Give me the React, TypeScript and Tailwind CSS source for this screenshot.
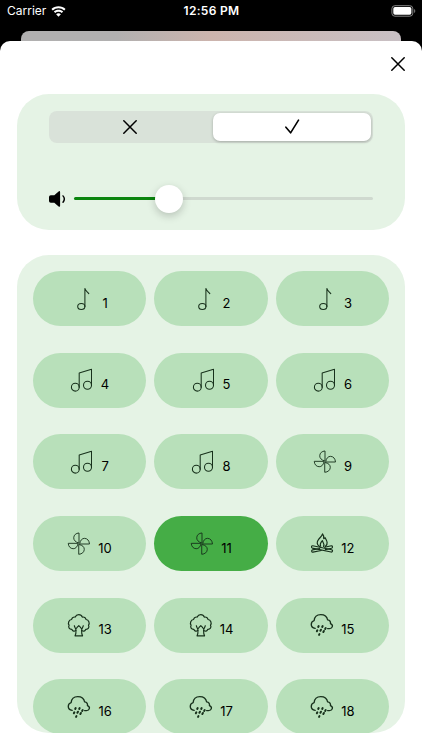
import { useState } from "react";
import type { ReactNode } from "react";

type SoundKind = "note" | "notes" | "fan" | "fire" | "tree" | "rain";

const sounds: SoundKind[] = [
  "note", "note", "note",
  "notes", "notes", "notes",
  "notes", "notes", "fan",
  "fan", "fan", "fire",
  "tree", "tree", "rain",
  "rain", "rain", "rain",
];

const iconShapes: Record<SoundKind, ReactNode> = {
  note: (
    <>
      <ellipse cx="10.3" cy="19.5" rx="3.6" ry="3" />
      <path d="M13.9 19.5V1.4c.4 2.400 2.600 3.300 3.900 5.200M13.900 1.800v2.500" />
    </>
  ),
  notes: (
    <>
      <circle cx="5.3" cy="19.2" r="3.9" />
      <circle cx="17.5" cy="17.2" r="4" />
      <path d="M9.2 19.2V5L21.5 1.3v15.900" />
    </>
  ),
  fan: (
    <g transform="translate(.3 .3) scale(.96)" strokeWidth=".95">
      <path d="M11.600 11C8.400 10.300 6.600 8 6.700 5.700 6.800 2.800 9 .9 12.200.7V11" />
      <path d="M13 11.500C13.500 8.300 15.500 6.200 18 6.300 20.900 6.400 22.900 8.700 23.100 12.200H13" />
      <path d="M12.500 12.800C15.700 13.300 17.800 15.300 17.700 17.800 17.600 20.700 15.300 22.700 11.900 22.900V12.800" />
      <path d="M11.100 12.200C10.500 15.300 8.500 17.200 6.100 17.100 3.200 17 1.200 14.900 1 11.500H11.100" />
    </g>
  ),
  fire: (
    <g transform="translate(.9 .6) scale(.93)">
      <path
        d="M9.200 15C6.200 13 6.100 9.800 8.300 7.200 10 5.200 12 3.600 12.500 1.300c1.500 1.900 1.700 3.300 1.300 5.200l1.500-1c1.900 3.300 3.700 6.600.2 9.500M10.500 14.700c-1.400-2.500.1-4.100 1.900-6.100 0 2.300 2.900 3.400 1.200 6.200"
        strokeWidth="1.300"
      />
      <path
        d="m2 14.200 20.300 4.300c1.600.4 1 2.700-.6 2.400L1.600 16.700c-1.600-.4-1.100-2.800.4-2.500Z"
        strokeWidth="1.250"
      />
      <path
        d="m21.900 14.200-7.100 1.600M9.500 17.100l-7.700 1.500c-1.600.3-1.200 2.700.4 2.400l8.900-1.800M15.500 18.300l6.700-1.500c1.600-.4 1.200-2.900-.3-2.600"
        strokeWidth="1.250"
      />
    </g>
  ),
  tree: (
    <>
      <path
        d="M8.800 17.300C7.500 18.800 5.400 18.300 4.900 16.400 2.500 16.600.9 14.400 2.100 12.300.6 9.900 1.800 6.900 4.600 6.500 4.900 4.700 6.500 3.700 8.200 4.100 9.500.9 14.100.9 15.300 4.100c1.900-.4 3.400.6 3.700 2.400 2.800.4 4 3.400 2.500 5.800 1.200 2.100-.4 4.300-2.800 4.100-.5 1.900-2.600 2.400-3.900.9"
        strokeWidth="1.200"
      />
      <path
        d="M7.300 12.700c.3 1.800 1.600 2.500 1.700 4.600.1 2.300.1 4.200-1 5.500h7.600c-1.100-1.300-1.100-3.200-1-5.500.1-2.100 1.400-2.800 1.700-4.600M9.500 15.300l.8-1.200 1.500-1.500 1.500 1.500.8 1.200"
        strokeWidth="1.150"
      />
    </>
  ),
  rain: (
    <g transform="translate(.6 .2) scale(.95)">
      <path
        d="M4.800 16C2.200 15.500.6 13.700.7 11.600c.1-1.800 1.100-3.100 3-3.700C4.100 3.900 7 1.500 10.700 1.500c3.600 0 6.600 2.200 7.200 5.600 2 .3 3.300 1.900 3 3.900 1.800.8 2.400 2.100 1.900 3.400-.4 1.200-1.500 1.800-3 1.800h-1.900"
        strokeWidth="1.400"
      />
      <path
        d="m8.500 13.500-.5 1M12.700 13.500l-.5 1M15.900 15.600l-.6 1M7.100 18l-.5 1M10.900 17.400l-.6 1.100M14 18.700l-.6 1.100M9.300 22l-.4.800"
        strokeWidth="2.100"
      />
    </g>
  ),
};

function SoundIcon({ kind }: { kind: SoundKind }) {
  return (
    <svg
      viewBox="0 0 24 24"
      className="size-6 shrink-0"
      fill="none"
      stroke="#17301b"
      strokeWidth="1.050"
      strokeLinecap="round"
      strokeLinejoin="round"
    >
      {iconShapes[kind]}
    </svg>
  );
}

function CrossIcon() {
  return (
    <svg
      viewBox="0 0 14 14"
      className="size-3.5"
      fill="none"
      stroke="#000"
      strokeWidth="1.5"
      strokeLinecap="round"
    >
      <path d="m.8.8 12.4 12.400M13.200.8.8 13.200" />
    </svg>
  );
}

function StatusBar() {
  return (
    <div className="grid h-[22px] grid-cols-3 items-center pl-[7px] pr-[6px] text-white">

      <div className="flex items-center gap-[5px] text-[12px]">
        <span>Carrier</span>
        <svg viewBox="0 0 16 12" className="h-[11px] w-[15px]" fill="#fff">
          <path d="M8 .3c3 0 5.700 1.100 7.700 3l-1.500 1.600A9 9 0 0 0 8 2.500a9 9 0 0 0-6.200 2.400L.3 3.300C2.300 1.400 5 .3 8 .3Z" />
          <path d="M8 4.100c2 0 3.800.7 5.100 2l-1.500 1.600A5.200 5.200 0 0 0 8 6.300a5.200 5.200 0 0 0-3.600 1.400L2.900 6.100c1.300-1.300 3.100-2 5.100-2Z" />
          <path d="M8 7.900c1 0 1.900.4 2.600 1L8 11.700 5.400 8.900c.7-.6 1.600-1 2.600-1Z" />
        </svg>
      </div>

      <div className="whitespace-nowrap text-center text-[12px] font-semibold tracking-[0.3px]">
        12:56 PM
      </div>

      <svg viewBox="0 0 25 12" className="h-3 w-[25px] justify-self-end">
        <rect x=".9" y=".7" width="20.900" height="10.500" rx="3" fill="none" stroke="#858585" />
        <rect x="2.300" y="2.100" width="18.100" height="7.700" rx="1.700" fill="#fff" />
        <path d="M23.200 4c1.400.5 1.400 3.400 0 3.900Z" fill="#858585" />
      </svg>

    </div>
  );
}

export default function App() {
  const [enabled, setEnabled] = useState(true);
  const [selected, setSelected] = useState(11);
  const volume = 31.7;

  return (
    <div className="flex h-[750px] w-[422px] flex-col overflow-hidden bg-black font-['Inter','Liberation_Sans',sans-serif] text-black">

      <StatusBar />

      <div className="mx-[21px] mt-[9px] h-[10px] shrink-0 rounded-t-[8px] bg-linear-to-r from-[#b1b0b0] from-25% via-[#ccb4ad] via-50% to-[#c8c0c4]" />

      <div className="flex min-h-0 flex-1 flex-col rounded-t-[10px] bg-white px-[17px] pb-[17px]">

        <div className="flex h-[53px] shrink-0 justify-end pt-[15.500px]">
          <button className="h-3.5" aria-label="Close">
            <CrossIcon />
          </button>
        </div>

        <section className="h-[136px] w-[388px] shrink-0 rounded-[32px] bg-[#e5f3e5] px-8 pt-[16.500px]">

          <div className="grid h-8 w-[324px] grid-cols-2 rounded-[8px] bg-[#d9e2d9] p-[2px]">
            <button
              onClick={() => setEnabled(false)}
              className={`mr-[2px] flex items-center justify-center rounded-[7px] ${enabled ? "" : "bg-white shadow"}`}
              aria-label="Off"
            >
              <CrossIcon />
            </button>
            <button
              onClick={() => setEnabled(true)}
              className={`ml-[2px] flex items-center justify-center rounded-[7px] ${enabled ? "bg-white shadow-[0_1px_3px_rgba(0,0,0,0.25)]" : ""}`}
              aria-label="On"
            >
              <svg
                viewBox="0 0 15 15"
                className="size-[15px]"
                fill="none"
                stroke="#000"
                strokeWidth="1.6"
                strokeLinecap="round"
                strokeLinejoin="round"
              >
                <path d="m.9 8.200 4.700 5.600L13.500 1.200" />
              </svg>
            </button>
          </div>

          <div className="mt-[42px] flex h-7 w-[324px] items-center">
            <svg viewBox="0 0 18 18" className="mr-[7px] size-[18px] shrink-0">
              <path
                d="M0 7q0-1.800 1.800-1.800h3.500l4.300-3.700q1.500-1.100 1.500.8v13.400q0 1.800-1.500.7l-4.300-3.700H1.800Q0 12.700 0 11Z"
                fill="#000"
              />
              <path
                d="M14 5.900q2.700 3.100 0 6.300"
                fill="none"
                stroke="#000"
                strokeWidth="1.400"
                strokeLinecap="round"
              />
            </svg>
            <div className="relative h-[3px] flex-1 rounded-full bg-[#cfd9cf]">
              <div
                className="h-full rounded-full bg-[#0b850f]"
                style={{ width: `${volume}%` }}
              />
              <div
                className="absolute top-1/2 size-7 -translate-x-1/2 -translate-y-1/2 rounded-full bg-white shadow-[0_3px_8px_rgba(0,0,0,0.2)]"
                style={{ left: `${volume}%` }}
              />
            </div>
          </div>

        </section>

        <section className="mt-[25px] min-h-0 w-[388px] flex-1 overflow-hidden rounded-[32px] bg-[#e5f3e5] px-4 pt-4">

          <div className="grid grid-cols-3 gap-x-[8.300px] gap-y-[26.700px]">
            {sounds.map((kind, index) => (
              <button
                key={index}
                onClick={() => setSelected(index + 1)}
                className={`flex h-[55px] items-center justify-center gap-[7px] rounded-full ${
                  selected === index + 1 ? "bg-[#45ad46]" : "bg-[#b8e0ba]"
                }`}
              >
                <SoundIcon kind={kind} />
                <span className="pt-2 text-[13px] leading-4">{index + 1}</span>
              </button>
            ))}
          </div>

        </section>

      </div>

    </div>
  );
}
